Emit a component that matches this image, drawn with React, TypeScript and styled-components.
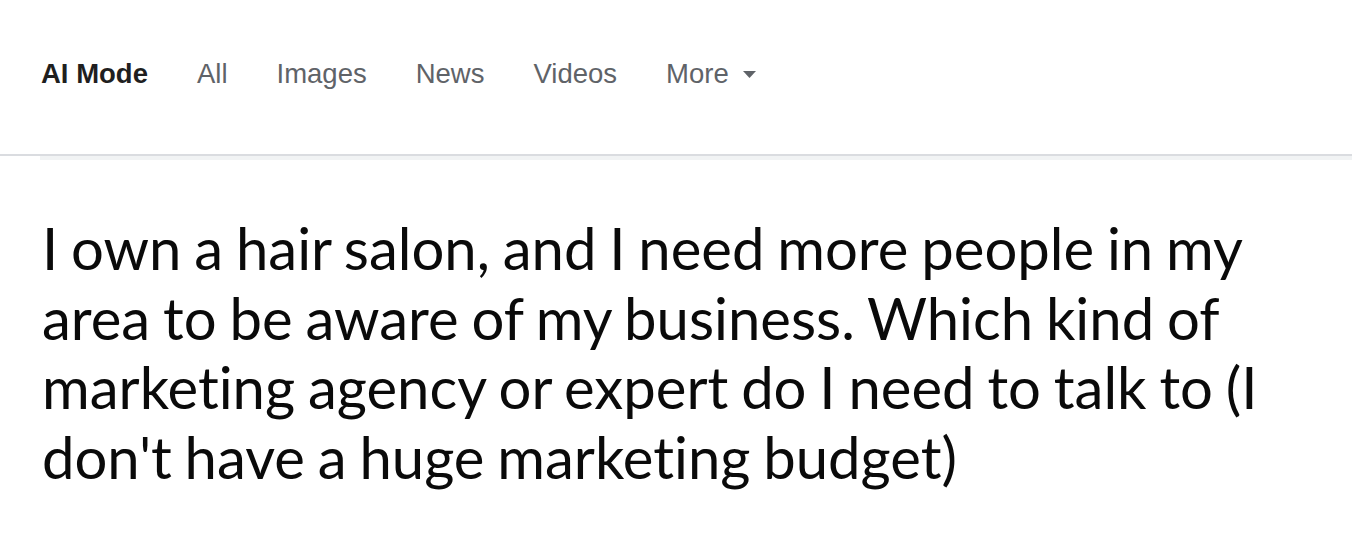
import React from "react";
import styled, { createGlobalStyle } from "styled-components";

const Global = createGlobalStyle`
  html, body { margin: 0; padding: 0; background: #fff; }
  body { font-family: "Liberation Sans", Arial, sans-serif; }
`;

const Page = styled.div`
  width: 1352px;
  height: 546px;
  background: #fff;
  overflow: hidden;
`;

const Tabs = styled.nav`
  display: flex;
  align-items: center;
  gap: 49px;
  height: 156px;
  padding: 0 0 6px 41px;
  box-sizing: border-box;
  border-bottom: 2px solid #dadce0;
`;

const Tab = styled.span<{ $active?: boolean }>`
  font-family: "Liberation Sans", Arial, sans-serif;
  font-size: 27.5px;
  font-weight: ${(p) => (p.$active ? 700 : 400)};
  color: ${(p) => (p.$active ? "#1f1f1f" : "#5f6368")};
  display: inline-flex;
  align-items: center;
  gap: 14px;
`;

const Band = styled.div`
  height: 4px;
  margin-left: 40px;
  background: #f1f3f4;
`;

const Query = styled.h1`
  margin: 0;
  padding: 53px 60px 0 42px;
  font-family: Lato, sans-serif;
  font-weight: 400;
  font-size: 58px;
  line-height: 69.5px;
  word-spacing: -2px;
  font-variant-ligatures: none;
  color: #0a0a0a;
`;

const Caret = () => (
  <svg width="13" height="7" viewBox="0 0 13 7">
    <path d="M0 0h13L6.5 7z" fill="#5f6368" />
  </svg>
);

export default function App() {
  return (
    <Page>
      <Global />
      <Tabs>
        <Tab $active>AI Mode</Tab>
        <Tab>All</Tab>
        <Tab>Images</Tab>
        <Tab>News</Tab>
        <Tab>Videos</Tab>
        <Tab>
          More <Caret />
        </Tab>
      </Tabs>
      <Band />
      <Query>
        I own a hair salon, and I need more people in my area to be aware of my
        business. Which kind of marketing agency or expert do I need to talk to
        (I don't have a huge marketing budget)
      </Query>
    </Page>
  );
}
